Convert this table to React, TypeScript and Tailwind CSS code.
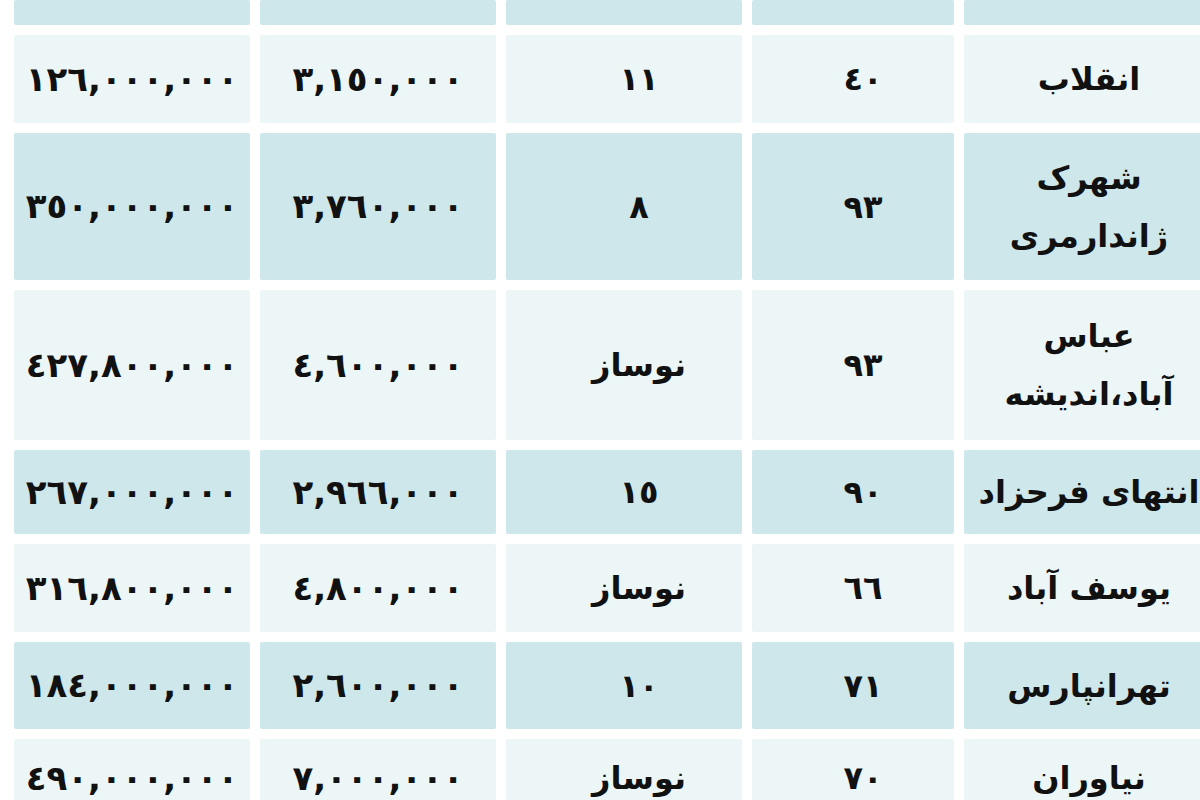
import React from 'react';

// Each row, left to right: total price, price per metre, age, size, area
interface Row {
  cells: [string, string, string, string, string[]];
  height: string;
  tint: 'blue' | 'light';
}

const rows: Row[] = [
  { cells: ['١٢٦,٠٠٠,٠٠٠', '٣,١٥٠,٠٠٠', '١١', '٤٠', ['انقلاب']], height: 'h-[88px]', tint: 'light' },
  { cells: ['٣٥٠,٠٠٠,٠٠٠', '٣,٧٦٠,٠٠٠', '٨', '٩٣', ['شهرک', 'ژاندارمری']], height: 'h-[147px]', tint: 'blue' },
  { cells: ['٤٢٧,٨٠٠,٠٠٠', '٤,٦٠٠,٠٠٠', 'نوساز', '٩٣', ['عباس', 'آباد،اندیشه']], height: 'h-[150px]', tint: 'light' },
  { cells: ['٢٦٧,٠٠٠,٠٠٠', '٢,٩٦٦,٠٠٠', '١٥', '٩٠', ['انتهای فرحزاد']], height: 'h-[84px]', tint: 'blue' },
  { cells: ['٣١٦,٨٠٠,٠٠٠', '٤,٨٠٠,٠٠٠', 'نوساز', '٦٦', ['یوسف آباد']], height: 'h-[88px]', tint: 'light' },
  { cells: ['١٨٤,٠٠٠,٠٠٠', '٢,٦٠٠,٠٠٠', '١٠', '٧١', ['تهرانپارس']], height: 'h-[87px]', tint: 'blue' },
  { cells: ['٤٩٠,٠٠٠,٠٠٠', '٧,٠٠٠,٠٠٠', 'نوساز', '٧٠', ['نیاوران']], height: 'h-[78px]', tint: 'light' },
];

const Cell = ({ children, tint, className = '' }: { children?: React.ReactNode; tint: 'blue' | 'light'; className?: string }) => (
  <div
    dir="rtl"
    className={`flex flex-col items-center justify-center rounded-[2px] ${
      tint === 'blue' ? 'bg-[#cde7eb]' : 'bg-[#edf6f7]'
    } ${className}`}
  >
    {children}
  </div>
);

export default function App() {
  return (
    <div
      className="w-[1200px] h-[800px] overflow-hidden bg-white pl-[14px] text-[#111]"
      style={{ fontFamily: '"DejaVu Sans", sans-serif' }}
    >
      <div className="grid w-[1214px] grid-cols-[236px_236px_236px_202px_264px] gap-x-[10px] gap-y-[10px]">
        {/* header strip, mostly cut off at the top */}
        {[0, 1, 2, 3, 4].map((i) => (
          <Cell key={i} tint="blue" className="h-[25px]" />
        ))}

        {rows.map((row, r) => (
          <React.Fragment key={r}>
            <Cell tint={row.tint} className={`${row.height} text-[34px] font-bold`}>
              {row.cells[0]}
            </Cell>
            <Cell tint={row.tint} className={`${row.height} text-[34px] font-bold`}>
              {row.cells[1]}
            </Cell>
            <Cell tint={row.tint} className={`${row.height} text-[32px] font-bold pl-[30px]`}>
              {row.cells[2]}
            </Cell>
            <Cell tint={row.tint} className={`${row.height} text-[32px] font-bold pl-[20px]`}>
              {row.cells[3]}
            </Cell>
            <Cell tint={row.tint} className={`${row.height} text-[32px] font-bold leading-[58px] pr-[14px]`}>
              {row.cells[4].map((line, i) => (
                <span key={i} className="whitespace-nowrap">
                  {line}
                </span>
              ))}
            </Cell>
          </React.Fragment>
        ))}
      </div>
    </div>
  );
}
